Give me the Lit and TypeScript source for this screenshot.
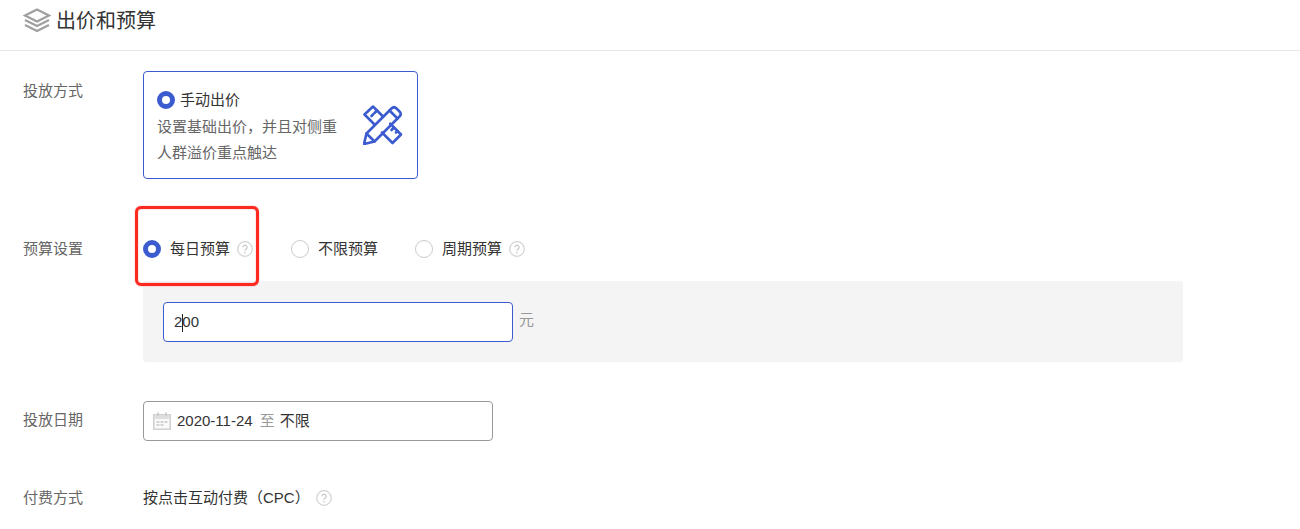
import { LitElement, html, css, svg } from "lit";
import { customElement } from "lit/decorators.js";

const help = html`<svg class="help" width="16" height="16" viewBox="0 0 16 16" fill="none">
  <circle cx="8" cy="8" r="7.3" stroke="#d2d2d2" stroke-width="1.2"/>
  <path d="M5.9 6.2a2.1 2.1 0 1 1 3.3 1.8c-.8.5-1.2.9-1.2 1.8" stroke="#c4c4c4" stroke-width="1.2"/>
  <circle cx="8" cy="11.8" r=".8" fill="#c4c4c4"/>
</svg>`;

const layers = svg`<svg width="28" height="25" viewBox="0 0 28 25" fill="none" stroke="#a0a0a0" stroke-width="2.4">
  <path d="M14 1.500 26 7.500 14 13.500 2 7.500Z"/>
  <path d="M2 12 14 18 26 12"/>
  <path d="M2 17 14 23 26 17"/>
</svg>`;

const tools = svg`<svg width="40" height="40" viewBox="0 0 40 40" fill="none" stroke="#3b5bce" stroke-width="2.600" stroke-linejoin="round" stroke-linecap="round">
  <path d="M19.750 11.250 10 1.500 1.500 9.500 11.500 19.500"/>
  <path d="M27.250 18.750 38 29.500 29.500 38 19 27.500"/>
  <path d="M14 5.500 11.500 8M10 9.500 8.500 11M31 22.500 28.500 25M34.500 26 33 27.500"/>
  <path d="M1 39 3.500 28.500 28.500 3.500C30 2 32 2 33.500 3.500L36.500 6.500C38 8 38 10 36.500 11.500L11.500 36.500Z"/>
  <path d="M3.500 28.500 11.500 36.500M26.500 5.500 34.500 13.500"/>
</svg>`;

const calendar = svg`<svg width="18" height="18" viewBox="0 0 18 18" fill="none">
  <rect x=".8" y="2.800" width="16.400" height="14.400" fill="#fafafa" stroke="#d0d0d0" stroke-width="1.500"/>
  <rect x="1" y="3" width="16" height="4" fill="#dedede"/>
  <path d="M5 .5V4M13 .5V4" stroke="#cccccc" stroke-width="1.800"/>
  <path d="M3.500 10h3M7.500 10h3M11.500 10h3M3.500 13h3M7.500 13h3" stroke="#d4d4d4" stroke-width="2"/>
</svg>`;

@customElement("app-root")
export class AppRoot extends LitElement {
  static styles = css`
    :host {
      display: block;
      position: relative;
      height: 529px;
      overflow: hidden;
      background: #fff;
      color: #333;
      font: 15px/20px "Liberation Sans", "Noto Sans CJK SC", sans-serif;
    }
    .head {
      height: 51px;
      box-sizing: border-box;
      border-bottom: 1px solid #e6e6e6;
      padding: 8px 0 0 23px;
      display: flex;
      align-items: flex-start;
      gap: 5px;
      font-size: 20px;
      line-height: 26px;
      color: #333;
    }
    .head svg { display: block; }
    .row { display: flex; padding-left: 23px; }
    .label { width: 120px; flex: none; color: #666; }
    .r1 { margin-top: 20px; }
    .r1 .label { padding-top: 10px; }
    .card {
      width: 275px;
      height: 108px;
      box-sizing: border-box;
      border: 1px solid #3b5bce;
      border-radius: 4px;
      padding: 18px 13px 0;
      display: flex;
      justify-content: space-between;
    }
    .card-title { display: flex; align-items: center; gap: 5px; color: #333; }
    .card-desc { width: 184px; margin-top: 4px; color: #666; line-height: 26px; }
    .card svg { margin: 15px 1px 0 0; }
    .radio {
      box-sizing: border-box;
      width: 18px;
      height: 18px;
      border-radius: 50%;
      flex: none;
      border: 1px solid #ccc;
    }
    .radio.on { border: 5px solid #3b5bce; background: #fff; }
    .r2 { margin-top: 60px; height: 20px; }
    .opts { display: flex; align-items: center; }
    .opt { display: flex; align-items: center; gap: 9px; margin-right: 37px; }
    .opt:first-child { margin-right: 38px; }
    .opt .help { margin-left: -2px; }
    .panel {
      margin: 22px 0 0 143px;
      width: 1040px;
      height: 81px;
      box-sizing: border-box;
      padding: 21px 20px 0;
      background: #f4f4f4;
      border-radius: 3px;
      display: flex;
      align-items: flex-start;
      gap: 6px;
    }
    .input {
      width: 350px;
      height: 40px;
      box-sizing: border-box;
      border: 1px solid #3b5bce;
      border-radius: 4px;
      background: #fff;
      padding: 0 10px;
      display: flex;
      align-items: center;
      position: relative;
    }
    .caret {
      position: absolute;
      left: 18px;
      top: 11px;
      width: 1px;
      height: 18px;
      background: #222;
    }
    .unit { color: #999; line-height: 36px; }
    .r3 { margin-top: 39px; }
    .r3 .label { padding-top: 9px; }
    .date {
      width: 350px;
      height: 40px;
      box-sizing: border-box;
      border: 1px solid #999;
      border-radius: 4px;
      padding: 0 9px;
      display: flex;
      align-items: center;
    }
    .date svg { margin-right: 6px; flex: none; }
    .to { color: #999; margin: 0 5px 0 7px; }
    .r4 { margin-top: 47px; }
    .cpc { display: flex; align-items: center; gap: 6px; }
    .mark {
      position: absolute;
      left: 135px;
      top: 206px;
      width: 124px;
      height: 80px;
      box-sizing: border-box;
      border: 3px solid #ff2a1f;
      border-radius: 6px;
      box-shadow: 0 0 1px #ff2a1f, inset 0 0 1px #ff2a1f;
      pointer-events: none;
    }
  `;

  render() {
    return html`
      <div class="head">${layers}<span>出价和预算</span></div>
      <div class="row r1">
        <div class="label">投放方式</div>
        <div class="card">
          <div>
            <div class="card-title"><span class="radio on"></span>手动出价</div>
            <div class="card-desc">设置基础出价，并且对侧重人群溢价重点触达</div>
          </div>
          ${tools}
        </div>
      </div>
      <div class="row r2">
        <div class="label">预算设置</div>
        <div class="opts">
          <label class="opt"><span class="radio on"></span>每日预算${help}</label>
          <label class="opt"><span class="radio"></span>不限预算</label>
          <label class="opt"><span class="radio"></span>周期预算${help}</label>
        </div>
      </div>
      <div class="panel">
        <div class="input">200<span class="caret"></span></div>
        <span class="unit">元</span>
      </div>
      <div class="row r3">
        <div class="label">投放日期</div>
        <div class="date">${calendar}<span>2020-11-24</span><span class="to">至</span><span>不限</span></div>
      </div>
      <div class="row r4">
        <div class="label">付费方式</div>
        <div class="cpc"><span>按点击互动付费（CPC）</span>${help}</div>
      </div>
      <div class="mark"></div>
    `;
  }
}
